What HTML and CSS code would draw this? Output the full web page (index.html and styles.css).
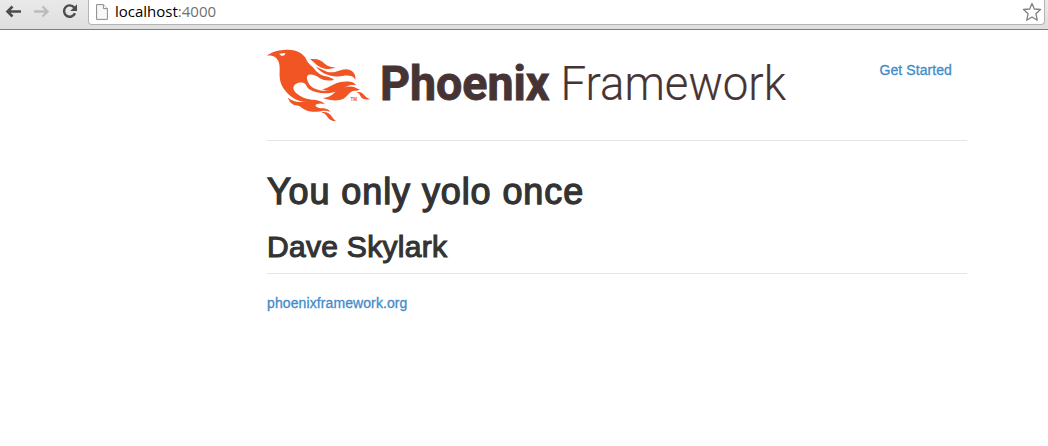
FILE: index.html
```html
<!DOCTYPE html>
<html lang="en">
<head>
<meta charset="utf-8">
<title>Phoenix Framework</title>
<link rel="stylesheet" href="styles.css">
</head>
<body>
<div class="toolbar">
  <svg class="nav" viewBox="0 0 88 29" fill="none">
    <path d="M21 11.500H8M12.500 6.500L7.500 11.500L12.500 16.500" stroke="#4c4c4c" stroke-width="2.600"/>
    <path d="M34 11.500H47M42.500 6.500L47.500 11.500L42.500 16.500" stroke="#bcbcbc" stroke-width="2.400"/>
    <path d="M74.200 7.500A5.700 5.700 0 1 0 75 13.300" stroke="#4c4c4c" stroke-width="2.400"/>
    <path d="M77 4.200V11H70.200Z" fill="#4c4c4c"/>
  </svg>
  <div class="address">
    <svg class="page-icon" viewBox="0 0 12 16"><path d="M.6 .6H7.400L11.400 4.600V15.400H.6Z" fill="#f8f8f8" stroke="#8b8b8b"/><path d="M7.400 .6V4.600H11.400" fill="#fff" stroke="#8b8b8b"/></svg>
    <span class="url">localhost<span class="port">:4000</span></span>
    <svg class="star" viewBox="0 0 20 20"><path d="M10 1.500L12.300 7L18.500 7.500L13.900 11.800L15.300 18.200L10 15L4.700 18.200L6.100 11.800L1.500 7.500L7.700 7Z" fill="#fff" stroke="#808080" stroke-width="1.300" stroke-linejoin="round"/></svg>
  </div>
</div>
<main class="container">
  <header class="header">
    <svg class="logo" viewBox="0 0 540 82" role="img" aria-label="Phoenix Framework">
      <g transform="scale(.3443 .3333) translate(0 -12)" fill="#f15524">
        <path fill-rule="evenodd" d="M20 47C34 35 56 29 82 29C108 30 124 40 133 55C137 67 143 73 153 81C163 94 172 104 188 108C198 110 206 113 215 119C201 124 186 122 174 115C163 106 149 101 140 105C133 110 137 122 144 134C154 147 172 152 190 152C207 151 218 146 229 135C244 122 270 121 279 136C264 130 255 136 245 142C233 151 220 157 203 159C180 162 158 157 143 148C135 142 136 132 125 128C113 126 100 130 97 142C96 156 112 166 127 173C137 178 148 179 160 179C145 185 129 187 114 182C97 176 82 165 69 146C59 131 56 115 57 94C58 76 56 62 46 53C38 47 29 46 20 47ZM56 41C58 46 65 49 71 46L74 39Z"/>
        <path d="M145 58C166 54 177 61 188 71C197 79 206 82 220 82C206 90 188 88 173 80C160 73 153 62 145 58Z"/>
        <path d="M162 81C174 84 184 91 194 95C210 100 223 95 236 90C260 82 280 96 277 119C269 105 255 106 239 108C218 112 203 107 188 101C175 95 169 87 162 81Z"/>
        <path d="M181 148C199 145 210 132 231 127C252 122 272 123 278 135C262 132 252 139 239 145C220 154 197 155 181 148Z"/>
        <path d="M182 174C201 173 210 165 221 154C236 140 263 137 275 142C282 146 287 149 292 147C286 153 278 152 270 153C257 158 253 171 240 178C222 184 202 181 182 174Z"/>
        <path d="M280 157C291 154 298 158 303 166C309 173 313 176 320 177C308 181 297 178 292 169C289 162 286 158 280 157Z"/>
        <path d="M81 173C91 181 104 187 120 186C130 185 137 182 145 181C164 178 181 183 188 193C177 188 164 191 161 196C163 204 174 205 185 205C195 206 201 209 204 217C192 208 180 214 165 215C149 217 130 211 121 203C113 194 103 199 94 192C87 187 84 180 81 173Z"/>
        <path d="M178 217C192 214 203 221 209 230C212 235 217 240 221 243C211 245 202 240 196 231C191 223 186 219 178 217Z"/>
      </g>
      <text class="tm" x="90.500" y="56.500" textLength="6.500" lengthAdjust="spacingAndGlyphs">TM</text>
      <text class="word-bold" x="120" y="55.800" textLength="169.500" lengthAdjust="spacingAndGlyphs">Phoenix</text>
      <text class="word-light" x="300.500" y="55.800" textLength="225.500" lengthAdjust="spacingAndGlyphs">Framework</text>
    </svg>
    <a class="link get-started" href="#">Get Started</a>
  </header>
  <h1 class="title">You only yolo once</h1>
  <h2 class="subtitle">Dave Skylark</h2>
  <footer class="footer"><a class="link org" href="#">phoenixframework.org</a></footer>
</main>
</body>
</html>
```
FILE: styles.css
```css
* { box-sizing: border-box; }
body { margin: 0; background: #fff; color: #333; font-family: "Liberation Sans", Arial, sans-serif; height: 446px; overflow: hidden; }
.toolbar { display: flex; height: 30px; background: linear-gradient(#e9e9e9, #dfdfdf); border-bottom: 1px solid #7e7e7e; }
.nav { width: 88px; height: 29px; flex: none; }
.address { display: flex; align-items: flex-start; width: 957px; height: 25px; padding: 0 2px 0 7px; background: #fff; border: 1px solid #b4b4b4; border-top: 0; border-radius: 0 0 4px 4px; }
.page-icon { width: 12px; height: 16px; margin-top: 4px; }
.url { margin-left: 7px; font: 15px/23px "Open Sans", "Noto Sans", sans-serif; color: #000; }
.port { color: #707070; }
.star { width: 20px; height: 20px; margin: 2px 0 0 auto; }
.container { width: 700px; margin-left: 267px; }
.header { display: flex; justify-content: space-between; height: 111px; padding-top: 14px; border-bottom: 1px solid #e5e5e5; }
.logo { width: 540px; height: 82px; margin-left: -7px; overflow: visible; }
.tm { font: bold 5px "Liberation Sans", sans-serif; fill: #f15524; }
.word-bold { font: 700 48px Roboto, sans-serif; fill: #463434; stroke: #463434; stroke-width: .9px; }
.word-light { font: 300 48px Roboto, sans-serif; fill: #463434; stroke: #463434; stroke-width: .2px; }
.link { color: #428bca; text-decoration: none; font-size: 14px; line-height: 20px; -webkit-text-stroke: .3px #428bca; }
.get-started { margin: 16px 15px 0 0; letter-spacing: .08px; }
.org { letter-spacing: .1px; }
.title { margin: 31px 0 0; font-size: 36px; line-height: 40px; font-weight: 400; letter-spacing: .9px; -webkit-text-stroke: 1.3px #333; }
.subtitle { margin: 18px 0 0; font-size: 30px; line-height: 33px; font-weight: 400; letter-spacing: .3px; -webkit-text-stroke: 1.1px #333; }
.footer { margin-top: 10px; padding-top: 19px; border-top: 1px solid #e5e5e5; }
```
